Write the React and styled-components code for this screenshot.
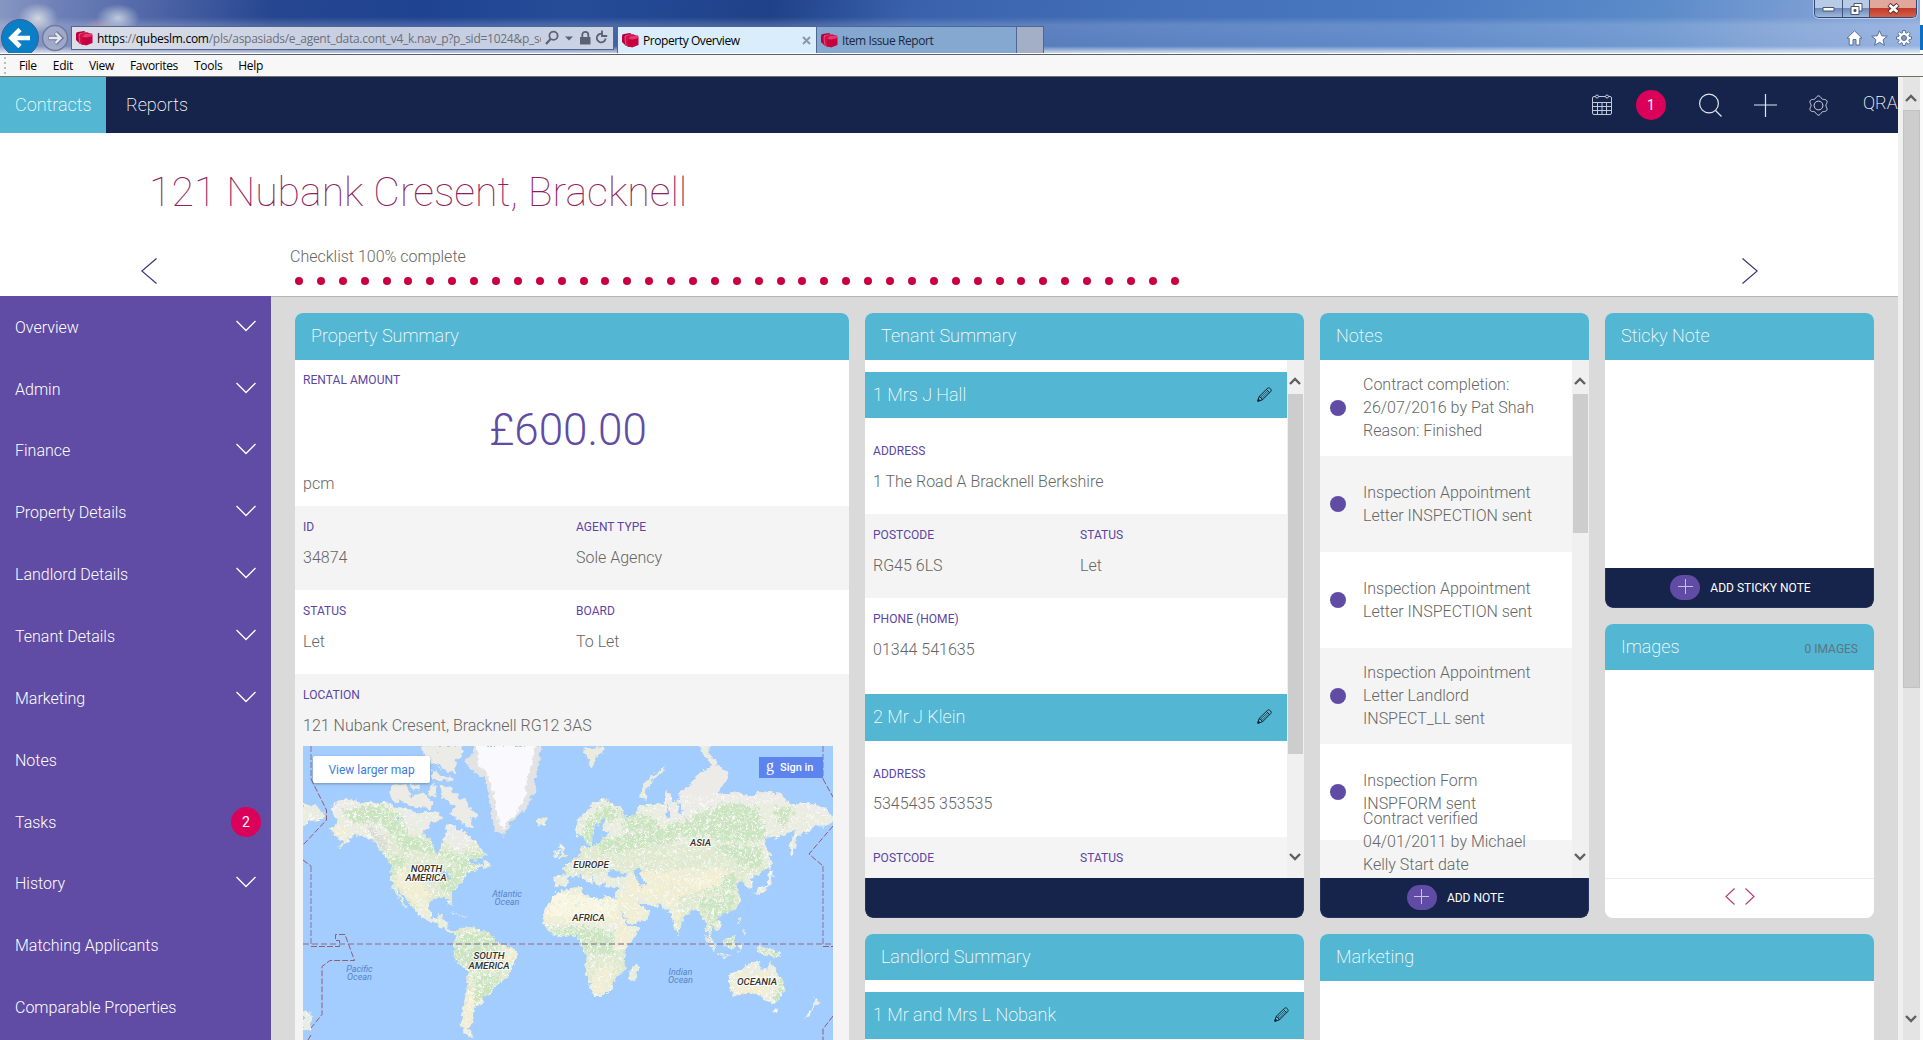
import React from "react";
import styled, { createGlobalStyle, css } from "styled-components";

const c = {
  teal: "#53b6d2",
  navy: "#16244b",
  purple: "#604ca4",
  pink: "#db0059",
  text: "#666",
  stripe: "#f4f4f4",
  track: "#f0f0f0",
  thumb: "#cdcdcd",
};

const Global = createGlobalStyle`
  * { box-sizing: border-box; }
  html, body { margin: 0; height: 100%; overflow: hidden; }
  body { font-family: Roboto, "Liberation Sans", sans-serif; font-size: 16px; font-weight: 300; color: ${c.text}; background: #fff; }
  #root { height: 100%; }
  svg { display: block; flex: none; }
`;

const Screen = styled.div`
  display: flex;
  flex-direction: column;
  width: 1923px;
  height: 1040px;
  overflow: hidden;
`;

/* ---------- browser window ---------- */

const Frame = styled.div`
  flex: none;
  height: 54px;
  display: flex;
  align-items: flex-start;
  border-bottom: 1px solid #fff;
  background:
    linear-gradient(#fff 0 25px, #0a6fc4 25px 50px, #fff 50px) right / 3px 100% no-repeat,
    linear-gradient(to bottom, transparent 0 17px, rgba(255,255,255,.17) 25px, rgba(255,255,255,.13) 46px, rgba(255,255,255,.75) 53px),
    radial-gradient(ellipse 20px 15px at 38px 18px, rgba(238,240,235,.75), transparent),
    radial-gradient(ellipse 22px 14px at 118px 18px, rgba(225,232,235,.75), transparent),
    radial-gradient(ellipse 18px 12px at 100px 30px, rgba(215,150,150,.6), transparent),
    linear-gradient(100deg, #8797c2 0, #6d80b7 60px, #4c63a5 160px, #264690 270px, #1f4391 420px, #264c98 560px, #1f4189 760px, #3a62ac 900px, #4370b8 1150px, #4a79c1 1400px, #5d8cca 1640px, #7a9dd3 1780px, #8ba9dc 1923px);
`;

const NavButtons = styled.div`
  width: 71px;
  height: 53px;
  overflow: hidden;
`;

const AddressBar = styled.div`
  display: flex;
  align-items: center;
  width: 543px;
  height: 24px;
  margin-top: 26px;
  padding: 0 5px 0 4px;
  border: 1px solid #54658f;
  background: linear-gradient(to right, #dcdfe8, #c3cce1 60%, #ccd4e6);
`;

const Url = styled.div`
  flex: 1;
  margin: 2px 4px 0 4px;
  overflow: hidden;
  white-space: nowrap;
  font: 12px/20px "Open Sans", "Noto Sans", sans-serif;
  letter-spacing: -0.27px;
  color: #6c7077;
  b { font-weight: 400; color: #000; }
`;

const TabStrip = styled.div`
  display: flex;
  margin: 26px 0 0 3px;
  height: 27px;
`;

const Tab = styled.div`
  display: flex;
  align-items: center;
  width: ${(p) => p.$w || 200}px;
  padding: 0 5px 0 4px;
  border: 1px solid #4f6795;
  border-bottom: 0;
  border-left-width: ${(p) => (p.$active ? 1 : 0)}px;
  background: ${(p) => (p.$active ? "#d9edfc" : p.$blank ? "#a3aec7" : "#84a8cf")};
  font: 12px/20px "Open Sans", "Noto Sans", sans-serif;
  letter-spacing: -0.42px;
  color: ${(p) => (p.$active ? "#000" : "#1c2740")};
  span { flex: 1; margin: 2px 0 0 4px; white-space: nowrap; }
`;

const FrameRight = styled.div`
  margin-left: auto;
  display: flex;
  flex-direction: column;
  align-items: flex-end;
`;

const WindowButtons = styled.div`
  display: flex;
  width: 103px;
  height: 18px;
  margin-right: 6px;
  border: 1px solid #34486f;
  border-top: 0;
  border-radius: 0 0 5px 5px;
  overflow: hidden;
  box-shadow: 0 0 0 1px rgba(255,255,255,.45);
`;

const WinButton = styled.div`
  flex: ${(p) => p.$w} 0 0;
  display: flex;
  align-items: center;
  justify-content: center;
  border-left: ${(p) => (p.$first ? 0 : 1)}px solid #41547c;
  background: ${(p) =>
    p.$close
      ? "linear-gradient(#e0a79d 0 45%, #c43b28 50%, #d2614a)"
      : "linear-gradient(#b8cbe6 0 45%, #6d8bba 50%, #9fb9dc)"};
`;

const ToolIcons = styled.div`
  display: flex;
  gap: 8px;
  margin: 12px 11px 0 0;
`;

const MenuBar = styled.div`
  flex: none;
  display: flex;
  align-items: center;
  gap: 16px;
  height: 23px;
  padding-left: 4px;
  border-top: 1px solid #5a5f6c;
  border-bottom: 1px solid #6d716a;
  background: #f7f7f7;
  font: 12px/20px "Open Sans", "Noto Sans", sans-serif;
  letter-spacing: -0.3px;
  color: #000;
`;

const Grip = styled.div`
  width: 2px;
  height: 18px;
  margin-right: -3px;
  background: repeating-linear-gradient(#bbb 0 2px, transparent 2px 5px);
`;

const Viewport = styled.div`
  flex: 1;
  min-height: 0;
  display: flex;
`;

const Page = styled.div`
  width: 1898px;
  display: flex;
  flex-direction: column;
  overflow: hidden;
`;

const PageEdge = styled.div`
  width: 5px;
  background: #f0f0f0;
`;

const PageScroll = styled.div`
  display: flex;
  flex-direction: column;
  align-items: center;
  width: 17px;
  background: #e4e4e4;
`;

const PageThumb = styled.div`
  width: 17px;
  height: 578px;
  background: ${c.thumb};
  border: 1px solid #c2c2c2;
`;

const ArrowCell = styled.div`
  display: flex;
  align-items: center;
  justify-content: center;
  width: 17px;
  height: ${(p) => p.$h || 17}px;
  padding-top: ${(p) => p.$pt || 0}px;
  margin-top: ${(p) => (p.$end ? "auto" : 0)};
`;

const Outside = styled.div`
  width: 3px;
  background: #fafafa;
`;

/* ---------- application header ---------- */

const AppBar = styled.div`
  flex: none;
  display: flex;
  align-items: center;
  height: 56px;
  background: ${c.navy};
  color: #fff;
  font-size: 18px;
  font-weight: 200;
`;

const NavTab = styled.div`
  height: 56px;
  line-height: 55px;
  padding-left: ${(p) => (p.$active ? 15 : 20)}px;
  width: ${(p) => (p.$active ? 106 : 90)}px;
  background: ${(p) => (p.$active ? c.teal : "transparent")};
`;

const NavIcons = styled.div`
  display: flex;
  align-items: center;
  margin-left: auto;
  width: 306px;
  height: 56px;
`;

const Badge = styled.div`
  flex: none;
  width: 30px;
  height: 30px;
  border-radius: 50%;
  background: ${c.pink};
  color: #fff;
  font-size: 14px;
  font-weight: 400;
  line-height: 30px;
  text-align: center;
`;

const User = styled.div`
  margin-left: 34px;
  white-space: nowrap;
  line-height: 52px;
  height: 56px;
`;

const Hero = styled.div`
  flex: none;
  height: 163px;
  padding-top: 29px;
`;

const Title = styled.h1`
  margin: 0 0 0 149px;
  font-size: 41px;
  line-height: 60px;
  font-weight: 100;
  color: #8f1f5e;
`;

const Stepper = styled.div`
  display: flex;
  align-items: flex-start;
`;

const StepArrow = styled.div`
  width: 16px;
  margin-top: 36px;
  margin-left: ${(p) => p.$ml}px;
`;

const Checklist = styled.div`
  width: 1452px;
  margin-left: 133px;
  padding-top: 23px;
  line-height: 23px;
`;

const Dots = styled.div`
  display: flex;
  gap: 13.9px;
  margin: 9px 0 0 5px;
`;

const Dot = styled.i`
  flex: none;
  width: ${(p) => p.$size}px;
  height: ${(p) => p.$size}px;
  border-radius: 50%;
  background: ${(p) => p.$color};
`;

/* ---------- body ---------- */

const Body = styled.div`
  flex: 1;
  min-height: 0;
  display: flex;
`;

const Sidebar = styled.nav`
  width: 271px;
  background: ${c.purple};
  color: #fff;
`;

const SideItem = styled.div`
  display: flex;
  align-items: center;
  justify-content: space-between;
  height: 62px;
  padding: 1px ${(p) => (p.$badge ? 10 : 15)}px 0 15px;
  &:nth-child(2), &:nth-child(9) { height: 61px; }
  > svg { margin-top: -3px; }
`;

const Board = styled.main`
  display: grid;
  grid-template-columns: 554px 439px 269px 269px;
  grid-template-rows: 605px 300px;
  gap: 16px;
  width: 1627px;
  padding: 16px 24px 0;
  border-top: 1px solid #b5b5b5;
  background: #dadada;
`;

const Card = styled.section`
  display: flex;
  flex-direction: column;
  min-height: 0;
  border-radius: 8px;
  overflow: hidden;
  background: #fff;
  ${(p) => p.$tall && css`grid-row: 1 / 3;`}
  ${(p) => p.$wide && css`grid-column: 3 / 5;`}
  ${(p) => p.$h && css`height: ${p.$h}px;`}
`;

const Stack = styled.div`
  display: flex;
  flex-direction: column;
  gap: 16px;
`;

const CardHeader = styled.header`
  flex: none;
  display: flex;
  justify-content: space-between;
  height: ${(p) => p.$h || 47}px;
  padding: 0 16px;
  line-height: 45px;
  font-size: 18px;
  font-weight: 200;
  background: ${c.teal};
  color: #fff;
  small { font-size: 12px; font-weight: 400; line-height: 50px; color: #5c7580; }
`;

const SubHeader = styled.div`
  flex: none;
  display: flex;
  justify-content: space-between;
  align-items: center;
  height: ${(p) => p.$h || 47}px;
  margin-top: ${(p) => p.$mt || 0}px;
  padding: 0 15px 2px 8px;
  font-size: 18px;
  font-weight: 200;
  background: ${c.teal};
  color: #fff;
`;

const FieldRow = styled.div`
  flex: none;
  display: grid;
  grid-template-columns: ${(p) => p.$col || 273}px 1fr;
  align-items: start;
  height: ${(p) => p.$h || 84}px;
  padding: ${(p) => p.$pt || 11}px 8px 0;
  background: ${(p) => (p.$grey ? c.stripe : "#fff")};
`;

const Label = styled.div`
  font-size: 12px;
  font-weight: 400;
  line-height: 20px;
  letter-spacing: 0.05px;
  text-transform: uppercase;
  color: #5b45a4;
`;

const Value = styled.div`
  margin-top: ${(p) => p.$mt || 9}px;
  line-height: 23px;
  white-space: nowrap;
`;

const Rent = styled.div`
  flex: none;
  height: 146px;
  padding: 10px 8px 0;
`;

const Price = styled.div`
  margin-top: 15px;
  font-size: 44px;
  line-height: 50px;
  text-align: center;
  padding-right: 8px;
  color: ${c.purple};
`;

const Location = styled.div`
  flex: 1;
  padding: 11px 16px 0 8px;
  background: ${c.stripe};
`;

const MapBox = styled.div`
  position: relative;
  height: 294px;
  margin-top: 9px;
  overflow: hidden;
  background: #a3ccff;
`;

const MapButton = styled.div`
  position: absolute;
  top: 10px;
  left: 10px;
  width: 117px;
  height: 27px;
  border-radius: 2px;
  background: #fff;
  box-shadow: 0 1px 3px rgba(0,0,0,.3);
  color: #3a7ddc;
  font-size: 12px;
  font-weight: 400;
  line-height: 28px;
  text-align: center;
`;

const SignIn = styled.div`
  position: absolute;
  top: 11px;
  right: 10px;
  display: flex;
  align-items: center;
  gap: 6px;
  width: 64px;
  height: 21px;
  padding-left: 7px;
  background: #5c83ee;
  color: #fff;
  font-size: 11px;
  font-weight: 500;
  i { font: 16px/16px "Liberation Serif", serif; margin-top: -3px; }
`;

const Scrollable = styled.div`
  flex: 1;
  min-height: 0;
  display: flex;
`;

const ScrollContent = styled.div`
  flex: 1;
  overflow: hidden;
  display: flex;
  flex-direction: column;
`;

const Scrollbar = styled.div`
  width: 17px;
  display: flex;
  flex-direction: column;
  align-items: center;
  background: ${c.track};
`;

const Thumb = styled.div`
  width: 15px;
  height: ${(p) => p.$h}px;
  background: ${c.thumb};
`;

const Note = styled.div`
  flex: none;
  display: flex;
  align-items: center;
  gap: 17px;
  height: 96px;
  padding: 0 6px 0.6px 10px;
  line-height: 23px;
  white-space: pre;
  background: ${(p) => (p.$grey ? c.stripe : "#fff")};
`;

const NoteText = styled.div`
  ${(p) => p.$lines && css`height: ${p.$lines * 23}px;`}
`;

const CardFooter = styled.footer`
  flex: none;
  display: flex;
  align-items: center;
  justify-content: center;
  gap: 10px;
  height: 40px;
  margin-top: auto;
  border-radius: 0 0 8px 8px;
  ${(p) =>
    p.$plain
      ? css`border-top: 1px solid #ececec; padding-bottom: 4px;`
      : css`background: ${c.navy}; border: 1px solid #26345c; border-top: 0; color: #fff; padding: 1px 0 0 2px;`}
  font-size: 12px;
  font-weight: 400;
  white-space: nowrap;
`;

const AddCircle = styled.span`
  display: flex;
  align-items: center;
  justify-content: center;
  width: 30px;
  height: 25px;
  margin-top: -2px;
  padding-bottom: 2px;
  border-radius: 12.5px;
  background: ${c.purple};
`;

/* ---------- drawings ---------- */

const Line = ({ w, h, d, color = "#fff", sw = 1.2, fill = "none" }) => (
  <svg width={w} height={h} viewBox={`0 0 ${w} ${h}`} fill={fill} stroke={color} strokeWidth={sw}>
    <path d={d} />
  </svg>
);

const ScrollArrow = ({ down }) => (
  <Line w={13} h={9} d={down ? "M1 2 L6 7 L11 2" : "M1 7 L6 2 L11 7"} color="#606060" sw={2.4} />
);

const Cube = () => (
  <svg width="17" height="15" viewBox="0 0 17 15">
    <path d="M0 3 Q0 1 2 1 L8 0 11 2 11 11 4 13 0 9Z" fill="#b8003c" />
    <path d="M2.5 4 Q3 2 5 2 L11 1 14 3 13 13 6 14 3 11Z" fill="#e2547f" />
    <path d="M3.5 5 Q4 3 6 2.6 L12 1.600 14 3 13 13 6 14 4 11Z" fill="#cf0f4b" />
    <path d="M6 6 L9 2.5 16 2.5 16.5 5 16.5 12 10 14.5 6.5 13Z" fill="#c4003f" />
    <path d="M6 6 L9 2.8 16 3 16.5 5 10.5 6.5Z" fill="#e5386d" />
  </svg>
);

const Pencil = () => (
  <svg width="15" height="15" viewBox="0 0 15 15" fill="none" stroke="#10222c" strokeWidth=".95">
    <path d="M.8 14.2 L2 9.6 L10.3 1.5 Q11.3 .5 12.4 1 L14 2.6 Q14.6 3.7 13.6 4.7 L5.3 13 Z M2 9.6 Q4.8 10 5.3 13 M9.4 2.4 L12.6 5.6" />
    <path d="M3.6 10.2 L10.6 3.600 M4.9 11.5 L11.7 4.700" strokeWidth=".6" />
    <path d="M.8 14.2 L1.4 12 L3 13.6Z" fill="#10222c" />
  </svg>
);

const gearPath = (cx, cy, teeth, r1, r2) => {
  const pts = [];
  for (let i = 0; i < teeth; i++) {
    const s = (Math.PI * 2) / teeth;
    [[-0.36, r1], [-0.2, r2], [0.2, r2], [0.36, r1]].forEach(([o, r]) => {
      const a = (i + o) * s - Math.PI / 2;
      pts.push(`${(cx + r * Math.cos(a)).toFixed(2)} ${(cy + r * Math.sin(a)).toFixed(2)}`);
    });
  }
  return `M${pts.join("L")}Z`;
};

const BackForward = () => (
  <svg width="71" height="53" viewBox="0 0 71 53">
    <circle cx="20" cy="38" r="18.5" fill="#0a7fc6" stroke="#3b5f92" />
    <path d="M30 38 H13 M20 29.500 L11.5 38 L20 46.500" fill="none" stroke="#fff" strokeWidth="4.600" />
    <circle cx="55" cy="38" r="12.5" fill="#a9b0cb" fillOpacity=".75" stroke="#707a9c" strokeWidth="1.5" />
    <path d="M48.5 38 H60 M55.5 32.5 L61 38 L55.5 43.5" fill="none" stroke="#6f7894" strokeWidth="4.4" />
    <path d="M49 38 H60 M55.5 33 L60.5 38 L55.5 43" fill="none" stroke="#e6e9f1" strokeWidth="2.4" />
  </svg>
);

const AddressIcons = () => (
  <svg width="63" height="18" viewBox="0 0 63 18" fill="none" stroke="#5c6270" strokeWidth="1.8">
    <circle cx="8.5" cy="6.8" r="4.1" />
    <path d="M5.6 10 L1 15" strokeWidth="2.2" />
    <path d="M20 7.5 h8 l-4 4z" fill="#5c6270" stroke="none" />
    <path d="M35 8 h10.5 v7.5 h-10.5z" fill="#5c6270" stroke="none" />
    <path d="M37.3 8 V5.8 a3 3 0 0 1 6 0 V8" />
    <path d="M60.6 9.5 a4.4 4.4 0 1 1 -2.8 -4.6" />
    <path d="M57 1.5 v5.5 h5.2" />
  </svg>
);

const Calendar = () => (
  <svg width="20" height="22" viewBox="0 0 20 22" fill="none" stroke="#c3c8d9" strokeWidth="1">
    <path d="M3.5 2.5 H2 Q.5 2.5 .5 4 V19 Q.5 20.5 2 20.5 H18 Q19.5 20.5 19.5 19 V4 Q19.5 2.5 18 2.5 H16.5 M6.5 2.5 H13.5 M.5 8.5 H19.5 M.5 12.5 H19.5 M.5 16.5 H19.5 M5.5 8.5 V20.5 M10 8.5 V20.5 M14.5 8.5 V20.5" />
    <circle cx="5" cy="2.5" r="1.5" />
    <circle cx="15" cy="2.5" r="1.5" />
  </svg>
);

const SettingsGear = () => {
  let d = "";
  for (let i = 0; i <= 72; i++) {
    const a = (i / 72) * Math.PI * 2;
    const r = 8.5 + 1.1 * Math.cos(a * 6);
    d += `${i ? "L" : "M"}${(10.5 + r * Math.sin(a)).toFixed(2)} ${(10.5 - r * Math.cos(a)).toFixed(2)}`;
  }
  return (
    <svg width="21" height="21" viewBox="0 0 21 21" fill="none" stroke="#d5d9e6">
      <path d={d + "Z"} />
      <circle cx="10.5" cy="10.5" r="4.4" />
    </svg>
  );
};

const LAND = [
  "M110 222 L125 200 150 190 190 200 232 206 258 200 285 215 320 222 345 235 380 230 400 235 412 250 395 258 380 262 370 275 358 295 375 310 388 325 392 355 405 358 402 330 425 300 415 285 430 262 452 285 470 318 475 330 500 315 518 345 535 360 515 372 480 375 500 385 530 392 505 405 480 415 465 440 445 460 435 480 440 512 428 508 425 488 400 490 378 500 372 525 385 545 400 545 412 533 412 552 425 565 425 580 440 590 458 585 452 600 425 590 405 570 375 560 345 540 330 515 305 480 292 455 300 485 318 522 305 508 280 465 270 430 275 400 262 370 240 340 225 315 190 300 165 305 155 325 130 340 145 318 115 300 112 280 130 262Z",
  "M446 290 L462 284 478 300 500 318 520 345 500 352 478 350 448 355 446 325Z",
  "M522 378 L540 384 541 396 522 392Z",
  "M455 585 L475 578 510 583 550 605 555 620 590 635 613 650 612 670 597 700 590 725 562 745 545 770 528 785 525 795 500 820 495 860 480 880 497 908 475 898 460 870 468 820 478 760 480 710 455 685 440 655 445 620Z",
  "M735 465 L785 458 792 478 835 492 850 482 882 490 893 530 912 575 945 578 930 610 905 640 902 680 905 705 880 730 868 765 850 780 822 783 808 745 797 700 803 660 785 625 775 602 735 607 705 600 685 565 685 535 705 490Z",
  "M938 683 L942 700 930 738 917 735 918 705Z",
  "M885 458 L908 470 932 490 945 510 977 530 960 555 920 570 903 545 888 515 880 490Z",
  "M768 290 L772 262 800 230 815 205 850 192 872 205 905 228 902 245 930 238 945 212 980 205 1010 210 1012 170 1028 168 1032 208 1045 200 1060 165 1085 150 1100 120 1150 85 1185 115 1170 150 1160 175 1210 175 1250 185 1265 170 1330 180 1350 205 1400 205 1450 220 1468 245 1468 262 1440 275 1420 270 1400 290 1372 300 1365 335 1352 368 1348 335 1360 300 1370 285 1340 298 1315 310 1280 310 1285 335 1300 365 1290 395 1265 420 1242 430 1254 462 1238 464 1225 440 1205 450 1215 475 1217 500 1200 525 1170 535 1153 545 1166 570 1155 587 1135 565 1140 605 1157 640 1140 625 1124 580 1115 545 1095 520 1070 540 1060 560 1048 597 1035 560 1025 525 1000 512 975 512 945 505 925 490 900 475 885 458 850 457 850 438 838 455 828 446 812 418 820 446 800 440 785 420 760 425 745 452 720 458 713 450 716 422 745 420 738 398 770 370 786 355 783 330 798 340 815 332 800 320 790 300 780 308Z",
  "M730 320 L738 335 750 362 746 372 724 372 735 355 727 338Z",
  "M714 348 L726 346 724 366 711 368Z",
  "M945 190 L955 150 975 125 1012 97 1008 112 975 140 962 170 965 194Z",
  "M790 42 L820 38 848 36 846 52 828 66 816 98 808 92 804 66Z",
  "M1105 33 L1135 33 1132 60 1155 80 1148 100 1135 82Z",
  "M1185 722 L1215 705 1245 685 1270 682 1275 702 1290 702 1297 678 1310 705 1335 740 1337 770 1315 803 1290 800 1265 778 1235 772 1195 785 1190 755Z",
  "M1306 820 L1318 820 1318 832 1307 832Z",
  "M1418 790 L1432 802 1415 820 1400 850 1392 848 1412 818Z",
  "M1175 612 L1198 602 1204 625 1192 642 1172 634Z",
  "M1120 598 L1140 620 1155 655 1140 645Z",
  "M1155 656 L1190 660 1180 664 1155 660Z",
  "M1210 620 L1222 632 1212 655Z",
  "M1258 636 L1300 640 1330 655 1320 668 1290 662 1262 648Z",
  "M1212 545 L1220 548 1215 570Z",
  "M1222 585 L1235 590 1228 602Z",
  "M1250 478 L1262 464 1290 452 1293 425 1305 420 1300 445 1285 470 1260 476Z",
  "M1296 350 L1302 380 1297 405 1290 400Z",
  "M1286 422 L1305 405 1303 422Z",
  "M35 205 L75 215 95 240 80 262 50 255 35 285Z",
  "M35 832 L58 832 58 885 35 885Z",
  "M430 530 L450 535 465 545 480 545 455 540Z",
  "M1046 600 L1054 600 1052 608Z",
  "M662 258 L672 246 694 250 690 268 670 272Z",
];

const ARCTIC = [
  "M275 150 L300 145 320 155 325 185 355 170 385 200 380 222 340 218 305 205 298 190 290 205 268 190Z",
  "M295 75 L330 62 360 95 335 105 300 96Z",
  "M350 35 L385 33 400 52 440 60 450 110 420 110 395 85 365 80 360 50Z",
  "M380 33 L465 33 470 50 442 85 425 75 400 50Z",
  "M385 105 L410 125 442 130 440 138 400 135 380 125Z",
  "M325 145 L352 150 350 165 330 162Z",
  "M385 150 L398 155 395 185 372 180Z",
  "M405 150 L425 152 440 170 475 195 490 225 510 240 500 255 488 245 495 280 470 272 450 245 430 240 445 215 425 195 408 185Z",
  "M398 246 L412 252 410 268 398 262Z",
];

const GREEN = [
  "M140 225 L250 205 300 245 320 300 280 300 240 260 170 262Z",
  "M285 290 L350 310 430 355 530 350 530 375 470 410 430 370 350 350 290 340Z",
  "M262 370 L310 355 300 420 275 420Z",
  "M430 395 L480 400 440 470 400 465Z",
  "M450 595 L540 595 560 640 540 700 470 700 440 650Z",
  "M500 720 L570 720 545 770 495 810Z",
  "M690 575 L800 575 905 600 870 650 800 620 735 605Z",
  "M790 615 L870 610 880 650 830 660 800 650Z",
  "M790 270 L850 205 900 240 830 275 860 320 920 345 850 350 790 315Z",
  "M900 235 L970 240 1010 290 900 290Z",
  "M850 310 L1000 285 1180 200 1260 215 1290 310 1200 330 1100 300 1000 330 860 350Z",
  "M1140 330 L1270 340 1285 395 1230 400Z",
  "M1100 500 L1210 470 1190 540 1140 560Z",
  "M1080 440 L1200 420 1210 460 1130 470Z",
  "M1310 215 L1360 220 1340 270 1320 270Z",
  "M1172 605 L1200 605 1198 640 1172 635Z",
  "M1260 640 L1330 650 1310 665Z",
  "M1320 700 L1340 760 1320 800 1300 790 1325 760Z",
];

const SAND = [
  "M285 395 L345 420 375 480 370 545 330 500 290 450Z",
  "M112 275 L150 280 150 310 118 300Z",
  "M570 640 L612 650 595 700 580 680Z",
  "M482 720 L500 800 485 890 462 880 478 800Z",
  "M705 470 L790 465 890 495 910 565 690 565 690 530Z",
  "M880 570 L940 580 900 640 870 640Z",
  "M820 700 L880 690 850 775 820 770Z",
  "M880 460 L975 530 920 568 885 500Z",
  "M930 410 L1180 400 1170 450 1060 480 1040 520 900 475Z",
  "M1195 720 L1310 715 1300 775 1200 780Z",
  "M1030 525 L1060 530 1050 570Z",
];

const WATER = [
  "M816 335 L818 300 832 270 846 252 852 256 840 285 870 296 840 306 834 325Z",
  "M856 412 Q870 398 880 408 L908 415 Q905 430 885 428 L860 428Z",
  "M930 402 L950 402 945 420 958 445 948 456 940 440Z",
  "M1050 200 L1062 225 1055 238 1046 220Z",
  "M1020 200 L1028 240 1018 250Z",
  "M360 290 L380 262 412 255 425 290 405 318 408 355 396 360 385 325Z",
  "M295 245 L302 255 290 260Z",
  "M405 405 L425 410 430 430 420 425Z",
];

const Shapes = ({ list, ...rest }) => (
  <g {...rest}>
    {list.map((d) => (
      <path key={d} d={d} />
    ))}
  </g>
);

const MAP_LABELS = [
  [123.5, 125.5, "NORTH"], [123, 135, "AMERICA"],
  [186, 212.500, "SOUTH"], [186, 222.500, "AMERICA"],
  [288, 121.5, "EUROPE"], [285.5, 174.5, "AFRICA"],
  [397.5, 99.5, "ASIA"], [454, 238.5, "OCEANIA"],
];
const SEA_LABELS = [
  [204, 151, "Atlantic"], [204, 159, "Ocean"],
  [56.5, 226, "Pacific"], [56.5, 234, "Ocean"],
  [377.5, 229, "Indian"], [377.5, 237, "Ocean"],
];

const WorldMap = () => (
  <svg width="530" height="294" viewBox="0 0 530 294" fontFamily="Roboto, sans-serif" fontStyle="italic">
    <defs>
      <filter id="coast" x="-5%" y="-5%" width="110%" height="110%">
        <feTurbulence type="fractalNoise" baseFrequency="0.2" numOctaves="3" seed="4" />
        <feDisplacementMap in="SourceGraphic" scale="7" xChannelSelector="R" yChannelSelector="G" />
      </filter>
      <filter id="patch" x="-5%" y="-5%" width="110%" height="110%">
        <feTurbulence type="fractalNoise" baseFrequency="0.14" numOctaves="4" seed="9" />
        <feDisplacementMap in="SourceGraphic" scale="38" xChannelSelector="R" yChannelSelector="G" />
        <feGaussianBlur stdDeviation="0.5" />
      </filter>
      <filter id="speckleLight" x="0" y="0" width="100%" height="100%">
        <feTurbulence type="fractalNoise" baseFrequency="0.13" numOctaves="4" seed="21" />
        <feColorMatrix values="0 0 0 0 .95  0 0 0 0 .95  0 0 0 0 .92  7 0 0 0 -3.900" />
      </filter>
      <filter id="speckleGreen" x="0" y="0" width="100%" height="100%">
        <feTurbulence type="fractalNoise" baseFrequency="0.12" numOctaves="4" seed="33" />
        <feColorMatrix values="0 0 0 0 .76  0 0 0 0 .88  0 0 0 0 .73  0 7 0 0 -4" />
      </filter>
      <clipPath id="land">
        {LAND.map((d) => (
          <path key={d} d={d} />
        ))}
      </clipPath>
    </defs>
    <g filter="url(#coast)">
      <g transform="scale(.36996 .33333) translate(-35 -33)">
        <Shapes list={LAND} fill="#e9ecdf" />
        <g clipPath="url(#land)">
          <path d="M240 300 H500 V520 H240Z M760 330 H1280 V420 H700Z M1040 420 H1230 V600 H1040Z M440 580 H620 V780 H440Z M780 640 H910 V740 H780Z" fill="#e0e9cf" />
          <path d="M100 180 H560 V262 L460 360 400 300 250 240 100 250Z M1010 60 H1480 V250 L1280 200 1100 270 1010 250Z" fill="#ecebe7" />
          <g filter="url(#patch)">
            <Shapes list={GREEN} fill="#cbe4c0" />
            <Shapes list={SAND} fill="#f3edd2" />
            <path d="M710 470 L890 495 870 550 700 545Z M1060 430 L1150 430 1110 455Z" fill="#faf5df" />
            <path d="M200 260 L250 300 270 350 250 340 215 300Z M1020 450 L1050 480 1110 500 1060 495Z M460 640 L480 700 475 820 470 700Z" fill="#dcdcd6" />
          </g>
          <path d="M440 200 H560 V380 H440Z M35 180 H430 V460 H200 L110 340Z M440 640 H620 V900 H440Z M790 630 H950 V790 H790Z M780 180 H1470 V400 H780Z M1040 420 H1340 V680 H1040Z" filter="url(#speckleLight)" />
          <path d="M240 300 H560 V480 H240Z M440 580 H600 V760 H440Z M760 200 H1300 V400 H760Z M1040 440 H1240 V600 H1040Z M780 590 H940 V680 H780Z" filter="url(#speckleGreen)" />
        </g>
        <Shapes list={ARCTIC} fill="#ecebe5" />
        <Shapes list={WATER} fill="#a3ccff" />
        <path d="M498 33 H680 L672 80 665 120 660 170 640 215 612 245 592 270 578 303 555 290 545 240 540 190 525 130 500 112 485 95 470 80 495 55Z" fill="#e2e3e2" />
        <path d="M505 33 H665 L655 80 640 130 638 180 620 220 590 260 572 285 560 240 550 180 530 110 510 90Z" fill="#fafafe" />
      </g>
    </g>
    <g fill="none" stroke="#8d6b8d">
      <path d="M0 198 H530" stroke="#9c8ba8" strokeWidth="1.6" strokeDasharray="6 3" />
      <path d="M8 0 V33 M8 120 V200 M520 0 V33 M520 120 V200" stroke="#8f8fb5" strokeWidth="1.4" strokeDasharray="6 2" />
      <path d="M8 33 L23.5 64 V74 L0 99 M0 114 L8 120 M8 200.5 H36.500 V194.500 H32.500 V188.500 H42 L51.500 214.500 H27 L19 220.500 V268.500 L8 282 M8 289 L5 294 M520 33 L530 51 M530 80 L506 108 520 120 M520 200.500 H530 M530 270 L520 283 V294" stroke="#935c75" strokeDasharray="6 2" />
    </g>
    <g fontSize="9.8" fontWeight="500" fill="#333" textAnchor="middle" stroke="#fff" strokeOpacity=".8" strokeWidth="2" paintOrder="stroke">
      {MAP_LABELS.map(([x, y, t]) => (
        <text key={t + x} x={x} y={y}>{t}</text>
      ))}
    </g>
    <g fontSize="9" fontWeight="400" fill="#5584c8" textAnchor="middle">
      {SEA_LABELS.map(([x, y, t]) => (
        <text key={t + x} x={x} y={y}>{t}</text>
      ))}
    </g>
  </svg>
);

/* ---------- composed parts ---------- */

const MENU = ["File", "Edit", "View", "Favorites", "Tools", "Help"];

const SIDE = [
  ["Overview", "more"], ["Admin", "more"], ["Finance", "more"], ["Property Details", "more"],
  ["Landlord Details", "more"], ["Tenant Details", "more"], ["Marketing", "more"], ["Notes"],
  ["Tasks", 2], ["History", "more"], ["Matching Applicants"], ["Comparable Properties"],
];

const NOTES = [
  "Contract completion:\n26/07/2016 by Pat Shah\nReason: Finished",
  "Inspection Appointment\nLetter INSPECTION sent",
  "Inspection Appointment\nLetter INSPECTION sent",
  "Inspection Appointment\nLetter Landlord\nINSPECT_LL sent",
  "Inspection Form\nINSPFORM sent",
];

const NavSlot = styled.span`
  margin-left: ${(p) => p.$gap}px;
`;

const Field = ({ label, value, mt }) => (
  <div>
    <Label>{label}</Label>
    {value && <Value $mt={mt}>{value}</Value>}
  </div>
);

const Bar = ({ thumb }) => (
  <Scrollbar>
    <ArrowCell $h={34} $pt={9}><ScrollArrow /></ArrowCell>
    <Thumb $h={thumb} />
    <ArrowCell $h={43} $end><ScrollArrow down /></ArrowCell>
  </Scrollbar>
);

const AddFooter = ({ children }) => (
  <CardFooter>
    <AddCircle><Line w={15} h={15} d="M7.500 0 V15 M0 7.500 H15" color="#c9c0e6" sw={1} /></AddCircle>
    {children}
  </CardFooter>
);

const BrowserFrame = () => (
  <>
    <Frame>
      <NavButtons><BackForward /></NavButtons>
      <AddressBar>
        <Cube />
        <Url><b>https</b>://<b>qubeslm.com</b>/pls/aspasiads/e_agent_data.cont_v4_k.nav_p?p_sid=1024&amp;p_session</Url>
        <AddressIcons />
      </AddressBar>
      <TabStrip>
        <Tab $active>
          <Cube /><span>Property Overview</span>
          <Line w={9} h={9} d="M1 1 L8 8 M8 1 L1 8" color="#8d98a5" sw={2} />
        </Tab>
        <Tab><Cube /><span>Item Issue Report</span></Tab>
        <Tab $blank $w={27} />
      </TabStrip>
      <FrameRight>
        <WindowButtons>
          <WinButton $w={28} $first>
            <svg width="13" height="6" viewBox="0 0 13 6"><path d="M1 1.500H12V5H1Z" fill="#fff" stroke="#4b5670" /></svg>
          </WinButton>
          <WinButton $w={27}>
            <svg width="13" height="12" viewBox="0 0 13 12" fill="#fff" stroke="#4b5670"><path d="M4 .5H12V8H4Z" /><path d="M1 3.500H9V11.500H1Z" /><path d="M4 6.500H6V8.500H4Z" fill="#4b5670" /></svg>
          </WinButton>
          <WinButton $w={47} $close>
            <svg width="13" height="11" viewBox="0 0 13 11" fill="none"><path d="M2 1.500L11 9.500M11 1.500L2 9.500" stroke="#5c2b2b" strokeWidth="4.600" /><path d="M2.500 2L10.500 9M10.500 2L2.500 9" stroke="#fff" strokeWidth="2.800" /></svg>
          </WinButton>
        </WindowButtons>
        <ToolIcons>
          <svg width="17" height="16" viewBox="0 0 17 16" fill="#fff" stroke="#50658f" strokeWidth=".9"><path d="M8.500 .8L16 8.200H13.800V15H10V9.500H7V15H3.200V8.200H1L8.500 .8Z" /></svg>
          <svg width="17" height="16" viewBox="0 0 17 16" fill="#fff" stroke="#50658f" strokeWidth=".9"><path d="M8.500 .6L10.700 5.800 16.300 6.200 12 9.800 13.400 15.300 8.500 12.300 3.600 15.300 5 9.800 .7 6.200 6.300 5.800Z" /></svg>
          <svg width="16" height="16" viewBox="0 0 16 16" fill="#fff" stroke="#50658f" strokeWidth=".9"><path d={gearPath(8, 8, 8, 5.4, 7.6)} /><circle cx="8" cy="8" r="2.500" fill="#7f9bcb" /></svg>
        </ToolIcons>
      </FrameRight>
    </Frame>
    <MenuBar>
      <Grip />
      {MENU.map((m) => <span key={m}>{m}</span>)}
    </MenuBar>
  </>
);

export default function App() {
  return (
    <Screen>
      <Global />
      <BrowserFrame />
      <Viewport>
        <Page>
          <AppBar>
            <NavTab $active>Contracts</NavTab>
            <NavTab>Reports</NavTab>
            <NavIcons>
              <Calendar />
              <NavSlot $gap={24}><Badge>1</Badge></NavSlot>
              <NavSlot $gap={33}>
                <svg width="24" height="24" viewBox="0 0 24 24" fill="none" stroke="#e3e6ef" strokeWidth="1.200">
                  <circle cx="10" cy="10.500" r="9.400" /><path d="M16.500 17.500 L22.500 23.500" />
                </svg>
              </NavSlot>
              <NavSlot $gap={31}>
                <svg width="23" height="23" viewBox="0 0 23 23" stroke="#e3e6ef" strokeWidth="1.200">
                  <path d="M11.500 0V23M0 11H23" />
                </svg>
              </NavSlot>
              <NavSlot $gap={31}><SettingsGear /></NavSlot>
              <User>QRAC</User>
            </NavIcons>
          </AppBar>
          <Hero>
            <Title>121 Nubank Cresent, Bracknell</Title>
            <Stepper>
              <StepArrow $ml={141}><Line w={16} h={26} d="M15.500 .5 L.8 13 L15.500 25.500" color="#3a3278" /></StepArrow>
              <Checklist>
                Checklist 100% complete
                <Dots>{Array.from({ length: 41 }, (_, i) => <Dot key={i} $size={8} $color="#c8003f" />)}</Dots>
              </Checklist>
              <StepArrow $ml={0}><Line w={16} h={26} d="M.5 .5 L15.200 13 L.5 25.500" color="#3a3278" /></StepArrow>
            </Stepper>
          </Hero>
          <Body>
            <Sidebar>
              {SIDE.map(([name, extra]) => (
                <SideItem key={name} $badge={extra === 2}>
                  {name}
                  {extra === "more" && <Line w={20} h={12} d="M.5 1 L10 10.500 L19.500 1" sw={1.3} />}
                  {extra === 2 && <Badge>2</Badge>}
                </SideItem>
              ))}
            </Sidebar>
            <Board>
              <Card $tall>
                <CardHeader>Property Summary</CardHeader>
                <Rent>
                  <Label>Rental amount</Label>
                  <Price>£600.00</Price>
                  <Value $mt={17}>pcm</Value>
                </Rent>
                <FieldRow $grey><Field label="ID" value="34874" /><Field label="Agent type" value="Sole Agency" /></FieldRow>
                <FieldRow><Field label="Status" value="Let" /><Field label="Board" value="To Let" /></FieldRow>
                <Location>
                  <Field label="Location" value="121 Nubank Cresent, Bracknell RG12 3AS" />
                  <MapBox>
                    <WorldMap />
                    <MapButton>View larger map</MapButton>
                    <SignIn><i>g</i>Sign in</SignIn>
                  </MapBox>
                </Location>
              </Card>

              <Card>
                <CardHeader>Tenant Summary</CardHeader>
                <Scrollable>
                  <ScrollContent>
                    <SubHeader $mt={12} $h={46}>1 Mrs J Hall<Pencil /></SubHeader>
                    <FieldRow $h={96} $pt={23}><Field label="Address" value="1 The Road A Bracknell Berkshire" /></FieldRow>
                    <FieldRow $grey $col={207}><Field label="Postcode" value="RG45 6LS" /><Field label="Status" value="Let" /></FieldRow>
                    <FieldRow $h={96}><Field label="Phone (home)" value="01344 541635" /></FieldRow>
                    <SubHeader>2 Mr J Klein<Pencil /></SubHeader>
                    <FieldRow $h={96} $pt={23}><Field label="Address" value="5345435 353535" mt={8} /></FieldRow>
                    <FieldRow $grey $col={207}><Field label="Postcode" /><Field label="Status" /></FieldRow>
                  </ScrollContent>
                  <Bar thumb={360} />
                </Scrollable>
                <CardFooter />
              </Card>

              <Card>
                <CardHeader>Notes</CardHeader>
                <Scrollable>
                  <ScrollContent>
                    {NOTES.map((n, i) => (
                      <Note key={i} $grey={i % 2 === 1}>
                        <Dot $size={16} $color={c.purple} />
                        <NoteText>{n}</NoteText>
                      </Note>
                    ))}
                    <Note $grey>
                      <Dot $size={16} $color={c.purple} />
                      <NoteText $lines={7}>{"Contract verified\n04/01/2011 by Michael\nKelly Start date"}</NoteText>
                    </Note>
                  </ScrollContent>
                  <Bar thumb={139} />
                </Scrollable>
                <AddFooter>ADD NOTE</AddFooter>
              </Card>

              <Stack>
                <Card $h={295}>
                  <CardHeader>Sticky Note</CardHeader>
                  <AddFooter>ADD STICKY NOTE</AddFooter>
                </Card>
                <Card $h={294}>
                  <CardHeader $h={46}>Images<small>0 IMAGES</small></CardHeader>
                  <CardFooter $plain>
                    <Line w={10} h={17} d="M9.500 .5 L1 8.500 L9.500 16.500" color="#b5437c" />
                    <Line w={10} h={17} d="M.5 .5 L9 8.500 L.5 16.500" color="#b5437c" />
                  </CardFooter>
                </Card>
              </Stack>

              <Card>
                <CardHeader $h={46}>Landlord Summary</CardHeader>
                <SubHeader $mt={12}>1 Mr and Mrs L Nobank<Pencil /></SubHeader>
              </Card>
              <Card $wide>
                <CardHeader>Marketing</CardHeader>
              </Card>
            </Board>
          </Body>
        </Page>
        <PageEdge />
        <PageScroll>
          <ArrowCell $h={33} $pt={9}><ScrollArrow /></ArrowCell>
          <PageThumb />
          <ArrowCell $h={43} $end><ScrollArrow down /></ArrowCell>
        </PageScroll>
        <Outside />
      </Viewport>
    </Screen>
  );
}
